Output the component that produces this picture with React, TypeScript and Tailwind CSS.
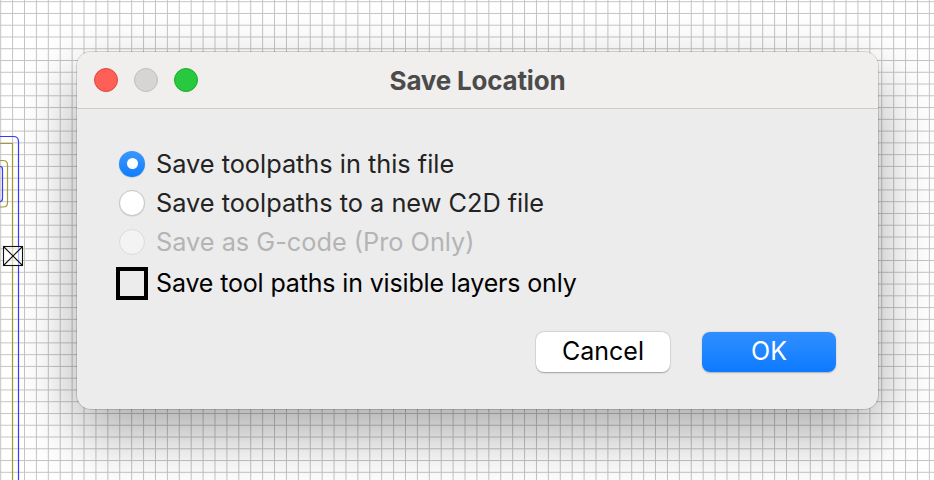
const FONT = 'font-["Inter","Liberation_Sans",sans-serif]';

function Radio({ state }: { state: 'on' | 'off' | 'disabled' }) {
  if (state === 'on') {
    return (
      <span className="w-[26px] h-[26px] rounded-full bg-gradient-to-b from-[#3a97ff] to-[#0a7cff] flex items-center justify-center shadow-[0_0.5px_1px_rgba(0,0,0,0.25)]">
        <span className="w-[11px] h-[11px] rounded-full bg-white" />
      </span>
    );
  }
  if (state === 'off') {
    return <span className="w-[26px] h-[26px] rounded-full bg-white border border-[#c6c6c6] shadow-[0_0.5px_1px_rgba(0,0,0,0.12)]" />;
  }
  return <span className="w-[26px] h-[26px] rounded-full bg-[#f3f3f3] border border-[#dadada]" />;
}

const OPTIONS: { label: string; state: 'on' | 'off' | 'disabled' }[] = [
  { label: 'Save toolpaths in this file', state: 'on' },
  { label: 'Save toolpaths to a new C2D file', state: 'off' },
  { label: 'Save as G-code (Pro Only)', state: 'disabled' },
];

function CanvasDrawing() {
  return (
    <svg className="absolute left-0 top-0" width="40" height="480" viewBox="0 0 40 480" fill="none">
      <path d="M0 136.5 H13.5 Q18.5 136.5 18.5 141.5 V480" stroke="#3a3aff" strokeWidth="1.2" />
      <path d="M0 143.5 H12.5 V480" stroke="#a39b34" strokeWidth="1.2" />
      <path d="M0 160.5 H3 Q7.5 160.5 7.5 165 V202.5 Q7.5 207 3 207 H0" stroke="#a39b34" strokeWidth="1.2" />
      <path d="M0 166.5 Q2.5 166.5 2.5 169.5 V198.5 Q2.5 201.5 0 201.5" stroke="#3a3aff" strokeWidth="1.2" />
      <rect x="3.5" y="246.5" width="19" height="19" stroke="#111" strokeWidth="1.1" fill="#fff" fillOpacity="0.6" />
      <path d="M3.5 246.5 L22.5 265.5 M22.5 246.5 L3.5 265.5" stroke="#111" strokeWidth="1.1" />
    </svg>
  );
}

export default function App() {
  return (
    <div
      className={`relative w-[934px] h-[480px] overflow-hidden bg-white bg-[linear-gradient(to_right,#c4c4c4_1.4px,transparent_1.4px),linear-gradient(to_bottom,#c4c4c4_1.4px,transparent_1.4px)] bg-[size:11.92px_11.77px] bg-[position:0.2px_1.2px] pt-[52px] pl-[77px] ${FONT}`}
    >
      <CanvasDrawing />

      <div className="relative w-[801px] rounded-[14px] overflow-hidden bg-[#ececec] shadow-[0_24px_60px_rgba(0,0,0,0.34),0_0_0_1px_rgba(0,0,0,0.14)]">
        {/* title bar */}
        <div className="relative h-[57px] bg-[#f0efee] border-b border-[#cbcbcb] flex items-center justify-center">
          <div className="absolute left-[17px] top-[16px] flex gap-[16px]">
            <span className="w-[24px] h-[24px] rounded-full bg-[#fe5f57] border border-[#e2463f]" />
            <span className="w-[24px] h-[24px] rounded-full bg-[#d6d5d4] border border-[#c0bfbe]" />
            <span className="w-[24px] h-[24px] rounded-full bg-[#28c840] border border-[#1eac2c]" />
          </div>
          <span className="text-[26px] font-bold text-[#4b4b4b] tracking-[-0.2px]">Save Location</span>
        </div>

        {/* body */}
        <div className="pt-[35px] pl-[39px] pr-[42px] pb-[37px]">
          {OPTIONS.map((o) => (
            <div key={o.label} className="h-[39px] flex items-center">
              <span className="w-[32px] flex justify-center">
                <Radio state={o.state} />
              </span>
              <span
                className={`ml-[8px] text-[25.3px] leading-none ${o.state === 'disabled' ? 'text-[#b4b4b4]' : 'text-[#232323]'}`}
              >
                {o.label}
              </span>
            </div>
          ))}

          <div className="mt-[6px] h-[33px] flex items-center">
            <span className="w-[32px] h-[33px] border-4 border-black bg-[#ececec]" />
            <span className="ml-[8px] text-[25px] leading-none text-black tracking-[-0.15px]">Save tool paths in visible layers only</span>
          </div>

          <div className="mt-[32px] flex justify-end gap-[32px]">
            <button className="w-[134px] h-[40px] rounded-[8px] bg-white text-[25px] text-black shadow-[0_0.5px_1.5px_rgba(0,0,0,0.3),0_0_0_0.5px_rgba(0,0,0,0.08)]">
              Cancel
            </button>
            <button className="w-[134px] h-[40px] rounded-[8px] bg-gradient-to-b from-[#2f8fff] to-[#0a7aff] text-[25px] text-white shadow-[0_0.5px_1.5px_rgba(0,0,0,0.25)]">
              OK
            </button>
          </div>
        </div>
      </div>
    </div>
  );
}
